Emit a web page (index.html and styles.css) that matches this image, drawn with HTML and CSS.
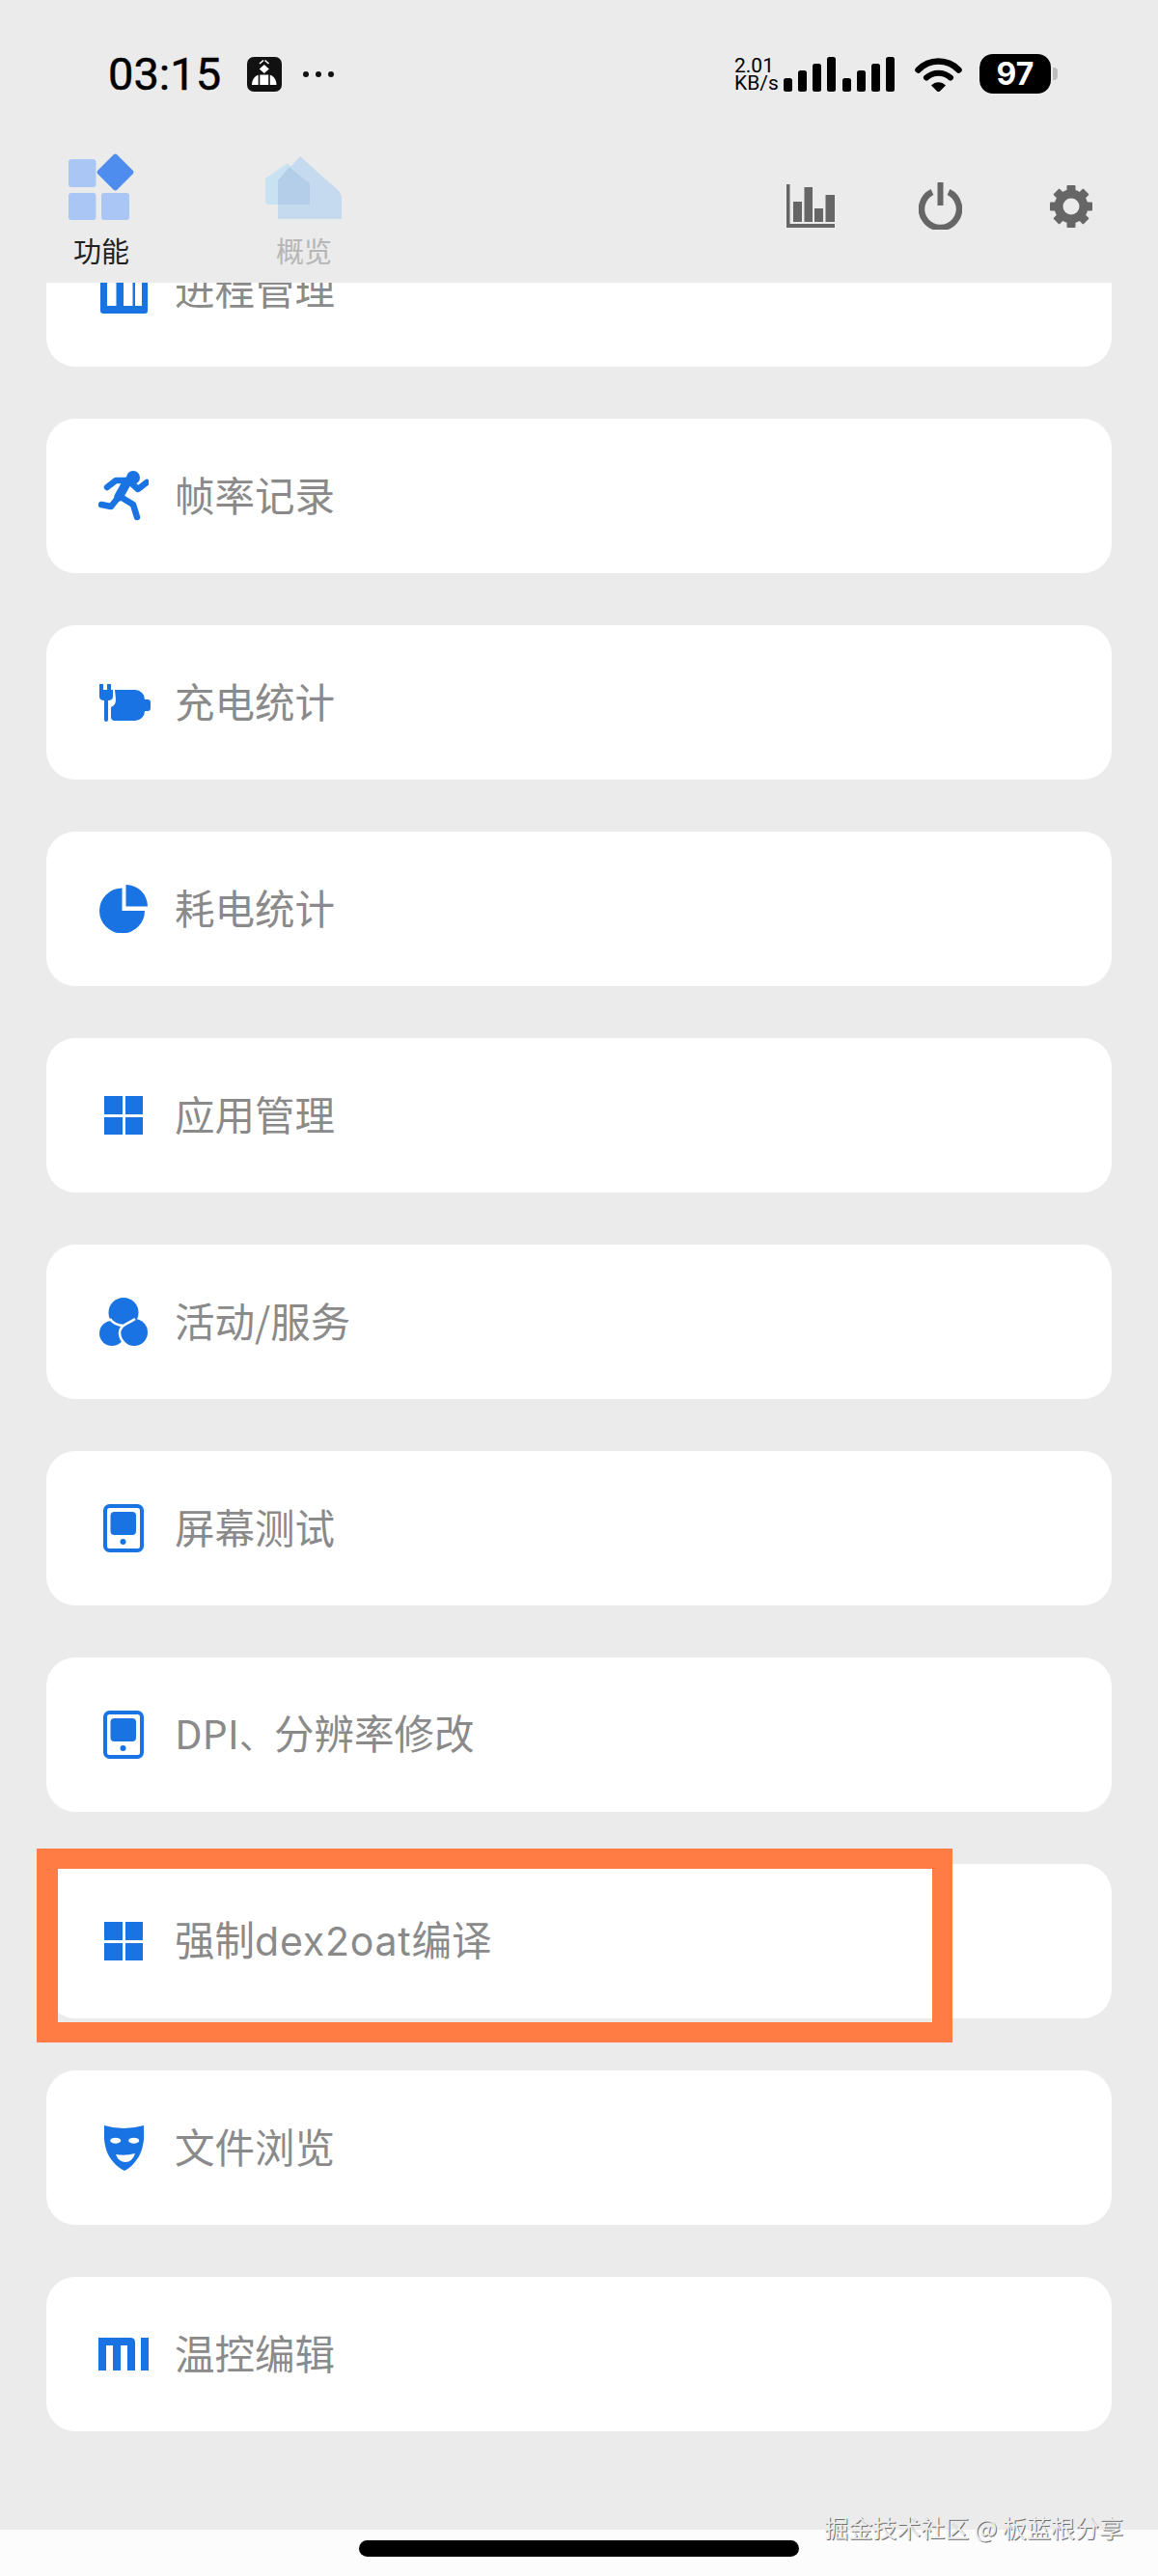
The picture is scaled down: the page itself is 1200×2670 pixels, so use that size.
FILE: index.html
```html
<!DOCTYPE html>
<html lang="zh-CN">
<head>
<meta charset="utf-8">
<title>功能</title>
<link rel="stylesheet" href="styles.css">
</head>
<body>
<div class="page">
  <header class="header">
    <div class="status">
      <div class="status-left">
        <span class="time">03:15</span>
        <svg class="badge" width="36" height="36" viewBox="0 0 36 36"><rect width="36" height="36" rx="7" fill="#111"/><path d="M17.800 8l5 4.500-5 4.500-5-4.500z" fill="#fff"/><path d="M13 7l4-3.500M22.500 7l-4-3.500" stroke="#fff" stroke-width="1.600"/><path d="M5 29c0-6 4-10.500 8-10.500h9.500c4 0 8 4.500 8 10.500z" fill="#fff"/><path d="M12.500 18v11M23 18v11" stroke="#111" stroke-width="1.600"/></svg>
        <svg class="dots" width="32" height="6" viewBox="0 0 32 6"><circle cx="3" cy="3" r="3"/><circle cx="16" cy="3" r="3"/><circle cx="29" cy="3" r="3"/></svg>
      </div>
      <div class="status-right">
        <div class="speed"><span>2.01</span><span>KB/s</span></div>
        <svg class="bars" width="116" height="36" viewBox="0 0 116 36"><rect x="0" y="22" width="9" height="14" rx="2.500"/><rect x="15" y="14" width="9" height="22" rx="2.500"/><rect x="30" y="7" width="9" height="29" rx="2.500"/><rect x="45" y="0" width="9" height="36" rx="2.500"/><rect x="61" y="22" width="9" height="14" rx="2.500"/><rect x="76" y="14" width="9" height="22" rx="2.500"/><rect x="91" y="7" width="9" height="29" rx="2.500"/><rect x="106" y="0" width="9" height="36" rx="2.500"/></svg>
        <svg class="wifi" width="49" height="36" viewBox="0 0 49 36"><path d="M3.500 13.500C15 1.500 34 1.500 45.500 13.500" fill="none" stroke="#000" stroke-width="6.500" stroke-linecap="round"/><path d="M12 21.500c7-6.500 18-6.500 25 0" fill="none" stroke="#000" stroke-width="6" stroke-linecap="round"/><path d="M17 29.500c4-4.500 11-4.500 15 0l-6 6c-.8.800-2.200.800-3 0z"/></svg>
        <div class="battery"><span class="battery-body">97</span><span class="battery-tip"></span></div>
      </div>
    </div>
    <nav class="tabs">
      <div class="tab tab-active">
        <svg width="68" height="69" viewBox="0 0 68 69"><rect x="0" y="6" width="28.500" height="29" rx="3" fill="#a9c6f5"/><rect x="0" y="41" width="28.500" height="28" rx="3" fill="#a9c6f5"/><rect x="34" y="41" width="29" height="28" rx="3" fill="#a9c6f5"/><path d="M46.500 1.500a3 3 0 0 1 4 0L66.500 17.500a3 3 0 0 1 0 4L50.500 37.500a3 3 0 0 1-4 0L30.500 21.500a3 3 0 0 1 0-4z" fill="#4e8dee"/></svg>
        <span>功能</span>
      </div>
      <div class="tab tab-idle">
        <svg width="80" height="67" viewBox="0 0 80 67"><path d="M13 66V27L36 1l30 27q13 10 13 15v23z" fill="#c5d9ef"/><path d="M0 48V24L23 8l23 21v22H3q-3 0-3-3z" fill="#c9e2f2"/><path d="M13 51V26L25 12 46 29v22z" fill="#b4cee9"/></svg>
        <span>概览</span>
      </div>
      <div class="actions">
        <svg class="action-chart" width="50" height="45" viewBox="0 0 50 45"><path d="M0 0h3.500v41H50v4H0z"/><rect x="7" y="18" width="9" height="21"/><rect x="18.500" y="3" width="8.500" height="36"/><rect x="29" y="25" width="9" height="14"/><rect x="40.500" y="11" width="9.500" height="28"/></svg>
        <svg class="action-power" width="45" height="49" viewBox="0 0 45 49"><path d="M14 10A19.500 19.500 0 1 0 31 10" fill="none" stroke="#666" stroke-width="6.500"/><path d="M22.500 0v24" stroke="#666" stroke-width="6"/></svg>
        <svg width="46" height="44" viewBox="0 0 46 44"><circle cx="23" cy="22" r="13" fill="none" stroke="#666" stroke-width="9"/><g><rect x="18.500" y="0" width="9" height="8" rx="1"/><rect x="18.500" y="36" width="9" height="8" rx="1"/><rect x="18.500" y="0" width="9" height="8" rx="1" transform="rotate(45 23 22)"/><rect x="18.500" y="36" width="9" height="8" rx="1" transform="rotate(45 23 22)"/><rect x="18.500" y="0" width="9" height="8" rx="1" transform="rotate(90 23 22)"/><rect x="18.500" y="36" width="9" height="8" rx="1" transform="rotate(90 23 22)"/><rect x="18.500" y="0" width="9" height="8" rx="1" transform="rotate(135 23 22)"/><rect x="18.500" y="36" width="9" height="8" rx="1" transform="rotate(135 23 22)"/></g></svg>
      </div>
    </nav>
  </header>

  <main class="viewport">
    <div class="list">
      <div class="card">
        <span class="icon"><svg width="49" height="50" viewBox="0 0 49 50"><rect width="49" height="50" rx="3" fill="#1a73e3"/><rect x="7" y="6" width="9.500" height="36" fill="#fff"/><rect x="24" y="6" width="9.500" height="36" fill="#fff"/><rect x="36" y="6" width="7" height="36" fill="#fff"/></svg></span>
        <span class="label">进程管理</span>
      </div>
      <div class="card">
        <span class="icon"><svg width="52" height="52" viewBox="0 0 52 52"><circle cx="36" cy="7" r="7" fill="#1a73e3"/><path d="M9 17l9-7h13l10 9 9-7M23 27l13 8 4 13M21 27l-8 10-10-2" fill="none" stroke="#1a73e3" stroke-width="6.500" stroke-linecap="round" stroke-linejoin="round"/><path d="M30 11L21 27" stroke="#1a73e3" stroke-width="9.500" stroke-linecap="round"/></svg></span>
        <span class="label">帧率记录</span>
      </div>
      <div class="card">
        <span class="icon"><svg width="56" height="39" viewBox="0 0 56 39"><path d="M3 0h4v6h4V0h4v6h2v7q0 4-5 4v20q0 2-2 2t-2-2V17q-5 0-5-4V6h0z" fill="#1a73e3"/><path d="M19 6h21a10 10 0 0 1 10 10h3q3 0 3 3v6q0 3-3 3h-3a10 10 0 0 1-10 10H19q-4 0-4-4V24q5-2 5-8z" fill="#1a73e3"/></svg></span>
        <span class="label">充电统计</span>
      </div>
      <div class="card">
        <span class="icon"><svg width="50" height="50" viewBox="0 0 50 50"><path d="M23.500 3.500A23.500 23.500 0 1 0 47 27H23.500z" fill="#1a73e3"/><path d="M27.500 0A22.500 22.500 0 0 1 50 22.500H27.500z" fill="#1a73e3"/></svg></span>
        <span class="label">耗电统计</span>
      </div>
      <div class="card">
        <span class="icon"><span class="grid-icon"><i></i><i></i><i></i><i></i></span></span>
        <span class="label">应用管理</span>
      </div>
      <div class="card">
        <span class="icon"><svg width="50" height="50" viewBox="0 0 50 50"><circle cx="13" cy="37" r="13" fill="#1a73e3"/><circle cx="25" cy="15.500" r="15.500" fill="#1a73e3"/><circle cx="36" cy="36" r="14" fill="#1a73e3"/><path d="M37 22C30 27 21 28 21 37C21 42 24 46 29 50M11 22Q16 29 25 29" fill="none" stroke="#fff" stroke-width="2.500"/></svg></span>
        <span class="label">活动/服务</span>
      </div>
      <div class="card">
        <span class="icon"><svg width="42" height="50" viewBox="0 0 42 50"><rect x="2" y="2" width="38" height="46" rx="4.500" fill="#fff" stroke="#1a73e3" stroke-width="4"/><rect x="7.500" y="8" width="26.500" height="24" rx="4" fill="#1a73e3"/><circle cx="20.500" cy="39" r="3" fill="#1a73e3"/></svg></span>
        <span class="label">屏幕测试</span>
      </div>
      <div class="card">
        <span class="icon"><svg width="42" height="50" viewBox="0 0 42 50"><rect x="2" y="2" width="38" height="46" rx="4.500" fill="#fff" stroke="#1a73e3" stroke-width="4"/><rect x="7.500" y="8" width="26.500" height="24" rx="4" fill="#1a73e3"/><circle cx="20.500" cy="39" r="3" fill="#1a73e3"/></svg></span>
        <span class="label">DPI<span class="punct">、</span>分辨率修改</span>
      </div>
      <div class="card card-marked">
        <span class="icon"><span class="grid-icon"><i></i><i></i><i></i><i></i></span></span>
        <span class="label">强制<span class="latin">dex2oat</span>编译</span>
        <span class="marker"></span>
      </div>
      <div class="card">
        <span class="icon"><svg width="41" height="47" viewBox="0 0 41 47"><path d="M0 0Q20 6 41 0C42 10 41 22 37 30C33 38 27 44 21 47C15 44 8 38 4 30C0 22-1 10 0 0z" fill="#1a73e3"/><ellipse cx="11.700" cy="15.700" rx="5.500" ry="3" fill="#fff"/><ellipse cx="30.700" cy="15.700" rx="5.500" ry="3" fill="#fff"/><path d="M12 30Q22 32 32 29Q29 38 22 38Q15 38 12 30z" fill="#fff"/></svg></span>
        <span class="label">文件浏览</span>
      </div>
      <div class="card">
        <span class="icon"><svg width="52" height="34" viewBox="0 0 52 34"><path d="M0 0H33Q38 0 38 5V34H30V8H23V34H15V8H8V34H0z" fill="#1a73e3"/><rect x="44" y="0" width="8" height="34" fill="#1a73e3"/></svg></span>
        <span class="label">温控编辑</span>
      </div>
    </div>
  </main>

  <footer class="gesture-area"><span class="gesture-pill"></span></footer>
  <div class="watermark">掘金技术社区 @ 板蓝根分享</div>
</div>
</body>
</html>
```
FILE: styles.css
```css
* { box-sizing: border-box; }
html, body { margin: 0; padding: 0; }
body {
  width: 1200px;
  height: 2670px;
  overflow: hidden;
  background: #ebebeb;
  font-family: "Noto Sans CJK SC", "Noto Sans", sans-serif;
}
.page {
  position: relative;
  width: 1200px;
  height: 2670px;
  display: flex;
  flex-direction: column;
  background: #ebebeb;
}
.header {
  height: 293px;
  flex: none;
  padding-top: 56px;
  display: flex;
  flex-direction: column;
}
.status {
  height: 41px;
  flex: none;
  display: flex;
  align-items: center;
  justify-content: space-between;
  padding: 0 104px 0 112px;
}
.status-left, .status-right { display: flex; align-items: center; }
.time {
  font-family: Roboto, sans-serif;
  font-size: 47px;
  font-weight: 400;
  line-height: 41px;
  color: #000;
  width: 120px;
  white-space: nowrap;
  -webkit-text-stroke: 0.5px #000;
}
.badge { margin-left: 24px; }
.dots { margin-left: 22px; fill: #111; }
.speed {
  display: flex;
  flex-direction: column;
  font-family: Roboto, sans-serif;
  font-size: 21px;
  line-height: 18px;
  color: #000;
  width: 51px;
}
.bars { fill: #000; }
.wifi { margin-left: 20px; fill: #000; }
.battery { margin-left: 18px; display: flex; align-items: center; gap: 2px; }
.battery-body {
  width: 74px;
  height: 41px;
  border-radius: 14px;
  background: #000;
  color: #fff;
  font-family: Inter, sans-serif;
  font-weight: 700;
  font-size: 32px;
  line-height: 41px;
  text-align: center;
}
.battery-tip {
  width: 5px;
  height: 13px;
  border-radius: 0 4px 4px 0;
  background: #bdbdbd;
}
.tabs {
  flex: none;
  display: flex;
  align-items: flex-start;
  margin-top: 62px;
  padding: 0 67px 0 65px;
}
.tab {
  width: 80px;
  display: flex;
  flex-direction: column;
  align-items: center;
}
.tab span {
  font-size: 29px;
  line-height: 34px;
  margin-top: 14px;
  white-space: nowrap;
}
.tab-active span { color: #222; }
.tab-idle { margin-left: 130px; }
.tab-idle svg { margin-top: 2px; }
.tab-idle span { color: #b6b6b6; }
.actions {
  margin-left: auto;
  margin-top: 30px;
  display: flex;
  align-items: center;
  gap: 90px;
  fill: #666;
}
.action-power { margin-left: -3px; }
.viewport {
  flex: 1;
  min-height: 0;
  overflow: hidden;
}
.list {
  margin-top: -73px;
  padding: 0 48px;
  display: flex;
  flex-direction: column;
  gap: 54px;
}
.card {
  position: relative;
  height: 160px;
  flex: none;
  background: #fff;
  border-radius: 30px;
  display: flex;
  align-items: center;
  padding-left: 50px;
}
.icon {
  width: 60px;
  height: 60px;
  flex: none;
  display: flex;
  align-items: center;
  justify-content: center;
}
.icon svg { display: block; }
.label {
  margin-left: 23px;
  padding-bottom: 4px;
  font-size: 41.500px;
  line-height: 56px;
  color: #8a8a8a;
  white-space: nowrap;
}
.punct { font-size: 36px; }
.latin { font-family: Inter, sans-serif; font-size: 41px; letter-spacing: 0.8px; }
.grid-icon {
  width: 40px;
  height: 40px;
  display: grid;
  grid-template-columns: 1fr 1fr;
  grid-template-rows: 1fr 1fr;
  gap: 3px;
}
.grid-icon i { display: block; background: #1a73e3; }
.marker {
  position: absolute;
  left: -10px;
  top: -16px;
  width: 949px;
  height: 201px;
  border: solid #ff7d45;
  border-width: 21px 21px 21px 22px;
  pointer-events: none;
}
.gesture-area {
  height: 48px;
  flex: none;
  background: #fcfcfc;
  padding-top: 11px;
  display: flex;
  justify-content: center;
}
.gesture-pill {
  width: 456px;
  height: 17px;
  border-radius: 9px;
  background: #000;
}
.watermark {
  position: absolute;
  right: 36px;
  top: 2601px;
  font-size: 25px;
  line-height: 36px;
  color: #ececec;
  text-shadow: 1px 1px 0 #6f6f6f;
  white-space: nowrap;
}
```
